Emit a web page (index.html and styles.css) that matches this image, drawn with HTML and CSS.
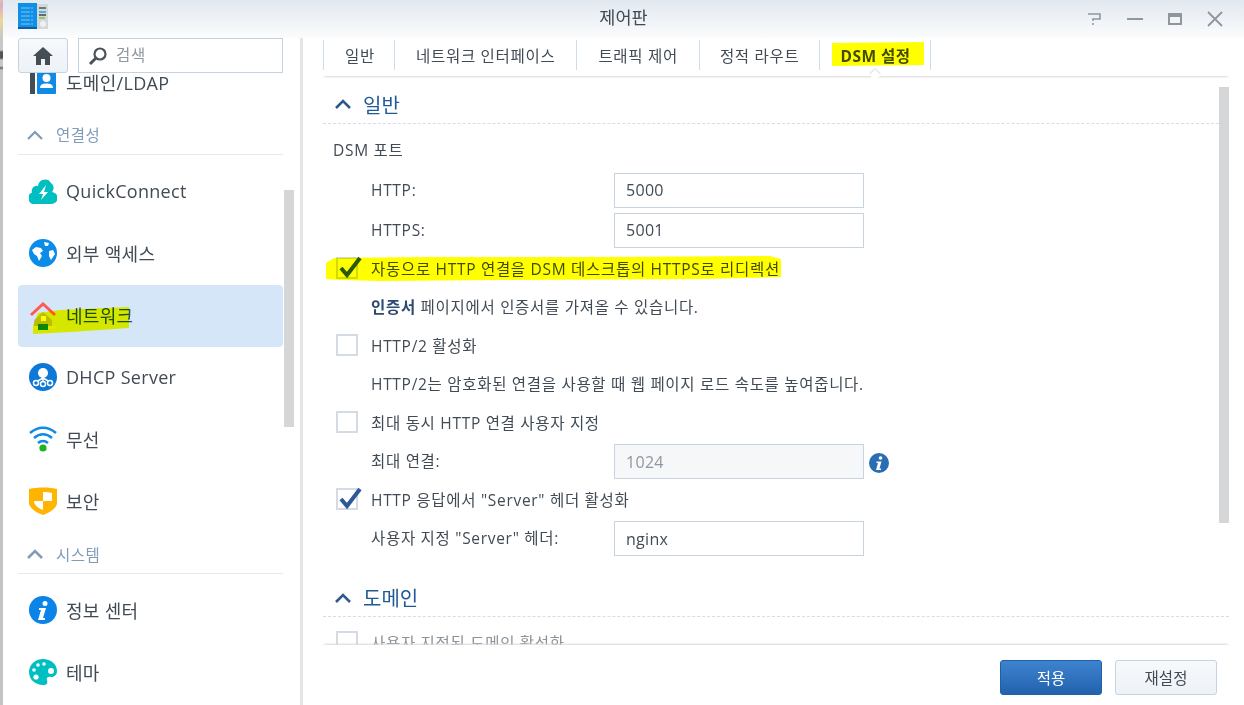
FILE: index.html
```html
<!DOCTYPE html>
<html lang="ko">
<head>
<meta charset="utf-8">
<title>제어판</title>
<link rel="stylesheet" href="styles.css">
</head>
<body>
<div class="desk"></div>
<div class="window">
  <header class="titlebar">
    <svg class="app-icon" width="32" height="28" viewBox="0 0 32 28"><rect x="0" y="1" width="19" height="24" fill="#0f8fe6"/><rect x="0" y="25" width="19" height="2" fill="#0a5fa8"/><path d="M3 6h12M3 10h12M3 14h12M3 18h12M3 22h12" stroke="#7cc6f5" stroke-width="1" stroke-dasharray="9 1"/><rect x="19" y="2" width="11" height="25" fill="#d3d8dc"/><path d="M21 6h7" stroke="#555" stroke-width="1.5"/><path d="M21 10h7" stroke="#1ea8d8" stroke-width="1.5"/><path d="M21 13h7" stroke="#444" stroke-width="1.5"/><path d="M21 16h6" stroke="#7bc62d" stroke-width="1.5"/><circle cx="25" cy="22" r="3" fill="#eef1f3"/></svg>
    <div class="title">제어판</div>
    <div class="win-controls">
      <svg width="16" height="16" viewBox="0 0 16 16"><path d="M1 3h12v5H6v2" fill="none" stroke="#8f979d" stroke-width="1.6"/><path d="M6 12v2" stroke="#8f979d" stroke-width="1.6"/></svg>
      <svg width="16" height="16" viewBox="0 0 16 16"><path d="M0 8h16" stroke="#8f979d" stroke-width="2"/></svg>
      <svg width="16" height="16" viewBox="0 0 16 16"><rect x="1" y="2" width="14" height="12" fill="#8f979d"/><rect x="3" y="6" width="10" height="6" fill="#f2f5f8"/></svg>
      <svg width="16" height="16" viewBox="0 0 16 16"><path d="M1 1l14 14M15 1L1 15" stroke="#8f979d" stroke-width="1.8"/></svg>
    </div>
  </header>
  <div class="panes">
    <aside class="sidebar">
      <div class="toolbar">
        <button class="home-btn"><svg width="22" height="20" viewBox="0 0 22 20"><path d="M11 1L1 10h3v9h5v-6h4v6h5v-9h3z" fill="#454d55"/></svg></button>
        <div class="search">
          <svg width="20" height="20" viewBox="0 0 20 20"><circle cx="12" cy="8" r="5.5" fill="none" stroke="#4a525a" stroke-width="2.2"/><path d="M8 12l-6 6" stroke="#4a525a" stroke-width="3"/></svg>
          <span>검색</span>
        </div>
      </div>
      <nav class="nav">
        <a class="item first">
          <svg class="ico" viewBox="0 0 28 28"><rect x="1" y="2" width="5" height="24" fill="#444d55"/><rect x="8" y="2" width="19" height="24" rx="1" fill="#0f8be6"/><circle cx="17.500" cy="10" r="4" fill="#fff"/><path d="M11 20c0-4 4-4.500 6.500-4.500S24 16 24 20z" fill="#fff"/></svg>
          <span>도메인/LDAP</span>
        </a>
        <div class="group"><svg width="16" height="10" viewBox="0 0 16 10"><path d="M1 9l7-7 7 7" fill="none" stroke="#7f9cb8" stroke-width="2.200"/></svg><span>연결성</span></div>
        <a class="item">
          <svg class="ico" viewBox="0 0 28 28"><path d="M6 27a6 6 0 0 1-3-11.500A5 5 0 0 1 9 9a7 7 0 0 1 13-3 6 6 0 0 1 1 9 6 6 0 0 1-1 12z" fill="#00bfc0"/><path d="M17 8l-7 9h4l-2 6 7-8h-4z" fill="#fff"/></svg>
          <span>QuickConnect</span>
        </a>
        <a class="item">
          <svg class="ico" viewBox="0 0 28 28"><circle cx="14" cy="14" r="14" fill="#0a8ce8"/><path d="M3 11l4-3 5 1 2 3-3 2 2 3-3 5-2-5-3-2zM15 3l5 1-1 3-3 0zM20 12l4-1 2 4-4 6-2-4z" fill="#fff"/></svg>
          <span>외부 액세스</span>
        </a>
        <a class="item active">
          <svg class="ico" viewBox="0 0 28 32"><path d="M14 10l-9 8v9h18v-9z" fill="#bcbcc0"/><path d="M2 13L14 2l12 11" fill="none" stroke="#ff5a50" stroke-width="3"/><rect x="12" y="14" width="5" height="5" fill="#fff"/><rect y="24" x="0" width="28" height="3" fill="#e4e6e8"/><rect x="9" y="22" width="10" height="6" fill="#0a8a10"/></svg>
          <span>네트워크</span>
        </a>
        <a class="item">
          <svg class="ico" viewBox="0 0 28 28"><circle cx="14" cy="14" r="14" fill="#0d78d8"/><circle cx="14" cy="10" r="5" fill="#fff"/><path d="M14 12v7M14 15l-7 4M14 15l7 4" stroke="#fff" stroke-width="1.500"/><g fill="#0d78d8" stroke="#fff" stroke-width="1.500"><circle cx="7" cy="20" r="2.500"/><circle cx="14" cy="21" r="2.500"/><circle cx="21" cy="20" r="2.500"/></g></svg>
          <span>DHCP Server</span>
        </a>
        <a class="item">
          <svg class="ico" viewBox="0 0 28 28"><g fill="none" stroke="#0f8be6" stroke-width="2.600"><path d="M1 8c8-7 18-7 26 0"/><path d="M5 13c6-5 12-5 18 0"/><path d="M9 18c3-2.500 7-2.500 10 0"/></g><circle cx="14" cy="23" r="3.600" fill="#1fb41f"/></svg>
          <span>무선</span>
        </a>
        <a class="item">
          <svg class="ico" viewBox="0 0 28 28"><path d="M0 2c9-2 19-2 28 0v14c0 5-8 10-14 12C8 26 0 21 0 16z" fill="#ffb400"/><path d="M14 5c3 0 6 0 9 1v8h-9zM14 14v9c-3-1-8-4-9-8v-1z" fill="#fff"/></svg>
          <span>보안</span>
        </a>
        <div class="group short"><svg width="16" height="10" viewBox="0 0 16 10"><path d="M1 9l7-7 7 7" fill="none" stroke="#7f9cb8" stroke-width="2.600"/></svg><span>시스템</span></div>
        <a class="item">
          <svg class="ico" viewBox="0 0 28 28"><circle cx="14" cy="14" r="14" fill="#0a84e8"/><circle cx="16" cy="7.500" r="2.500" fill="#fff"/><path d="M10 12h7l-3 10h2v2H9l3-10h-2z" fill="#fff"/></svg>
          <span>정보 센터</span>
        </a>
        <a class="item">
          <svg class="ico" viewBox="0 0 28 28"><path d="M14 1C6 1 0 7 0 14c0 8 7 13 14 13 4 0 5-2 4-5-1-2 1-4 4-3 3 0 6-2 6-6C28 6 22 1 14 1z" fill="#00bfc0"/><g fill="#fff"><circle cx="9" cy="7" r="1.800"/><circle cx="15" cy="6" r="1.800"/><circle cx="5" cy="12" r="1.800"/><circle cx="22" cy="13" r="3"/><circle cx="7" cy="19" r="2.600"/></g></svg>
          <span>테마</span>
        </a>
      </nav>
      <div class="scroll-thumb side"></div>
    </aside>
    <main class="main">
      <div class="tabs">
        <div class="tab">일반</div>
        <div class="tab">네트워크 인터페이스</div>
        <div class="tab">트래픽 제어</div>
        <div class="tab route">정적 라우트</div>
        <div class="tab current">DSM 설정</div>
      </div>
      <div class="scroller">
        <h2 class="section"><svg width="18" height="12" viewBox="0 0 18 12"><path d="M2 10l7-7 7 7" fill="none" stroke="#2c5a8c" stroke-width="2.600"/></svg><span>일반</span></h2>
        <div class="row top">DSM 포트</div>
        <div class="field"><label>HTTP:</label><input type="text" value="5000"></div>
        <div class="field"><label>HTTPS:</label><input type="text" value="5001"></div>
        <div class="row after"><span class="box"><svg width="26" height="24" viewBox="0 0 26 24"><path d="M4 12l6 7L23 2" fill="none" stroke="#2c5a96" stroke-width="4"/></svg></span>자동으로 HTTP 연결을 DSM 데스크톱의 HTTPS로 리디렉션</div>
        <div class="row indent"><b>인증서</b>&nbsp;페이지에서 인증서를 가져올 수 있습니다.</div>
        <div class="row"><span class="box"></span>HTTP/2 활성화</div>
        <div class="row indent">HTTP/2는 암호화된 연결을 사용할 때 웹 페이지 로드 속도를 높여줍니다.</div>
        <div class="row"><span class="box"></span>최대 동시 HTTP 연결 사용자 지정</div>
        <div class="row indent in"><label>최대 연결:</label><input type="text" value="1024" disabled>
          <svg class="info" width="20" height="20" viewBox="0 0 20 20"><circle cx="10" cy="10" r="10" fill="#2a6db5"/><circle cx="11.500" cy="5" r="1.800" fill="#fff"/><path d="M7.500 8.500h5l-2 7h1.500V17H7l2-7H7.500z" fill="#fff"/></svg>
        </div>
        <div class="row"><span class="box"><svg width="26" height="24" viewBox="0 0 26 24"><path d="M4 12l6 7L23 2" fill="none" stroke="#2c5a96" stroke-width="4"/></svg></span>HTTP 응답에서 "Server" 헤더 활성화</div>
        <div class="row indent in"><label>사용자 지정 "Server" 헤더:</label><input type="text" value="nginx"></div>
        <h2 class="section second"><svg width="18" height="12" viewBox="0 0 18 12"><path d="M2 10l7-7 7 7" fill="none" stroke="#2c5a8c" stroke-width="2.600"/></svg><span>도메인</span></h2>
        <div class="row clipped"><span class="box"></span>사용자 지정된 도메인 활성화</div>
      </div>
      <div class="scroll-thumb mainbar"></div>
      <footer class="footer">
        <button class="btn primary">적용</button>
        <button class="btn">재설정</button>
      </footer>
    </main>
  </div>
</div>
<svg class="marker" width="1244" height="705" viewBox="0 0 1244 705">
  <polygon points="832,43 924,42 924,65 832,66"/>
  <polygon points="326,263 334,258 420,257 600,257 770,256 781,259 781,277 700,279 500,280 380,281 340,280 326,279"/>
  <polygon points="33,334 33,326 38,313 60,310 129,307 129,328 70,332"/>
</svg>
</body>
</html>
```

FILE: styles.css
```css
* { box-sizing: border-box; }
html, body { margin: 0; height: 100%; overflow: hidden; }
body {
  display: flex;
  width: 1244px;
  height: 705px;
  position: relative;
  font-family: "Open Sans", "Noto Sans CJK KR", sans-serif;
  font-size: 15.5px;
  letter-spacing: .7px;
  color: #414b55;
  background: #fff;
}
.desk {
  width: 3px;
  flex: none;
  background: linear-gradient(#d8c8a8 0, #e0a8d0 5px, #e8d890 20px, #c8c8c8 38px, #c8c8c8 50px, #555 52px, #555 58px, #c8c8c8 60px, #c8c8c8 66px, #666 68px, #c4c4c4 70px, #c4c4c4 100%);
}
.window { flex: 1; display: flex; flex-direction: column; min-width: 0; }
.titlebar {
  height: 38px;
  flex: none;
  display: flex;
  align-items: center;
  position: relative;
  background: linear-gradient(#e2e8f0, #fbfcfd);
}
.app-icon { margin: -7px 0 0 15px; flex: none; }
.title { position: absolute; left: 0; right: 0; text-align: center; font-size: 17.5px; letter-spacing: 0; top: 4px; color: #3f4a55; }
.win-controls {
  margin-left: auto;
  display: flex;
  gap: 24px;
  padding-right: 21px;
}
.panes { flex: 1; display: flex; min-height: 0; }
.sidebar {
  width: 300px;
  flex: none;
  display: flex;
  flex-direction: column;
  position: relative;
  border-right: 3px solid #e4e4e4;
  overflow: hidden;
}
.toolbar {
  display: flex;
  gap: 10px;
  padding-left: 15px;
  height: 35px;
  flex: none;
  position: relative;
  z-index: 1;
  background: #fff;
}
.home-btn {
  width: 50px;
  height: 35px;
  padding: 0;
  border: 1px solid #c4d2e2;
  border-radius: 3px;
  background: linear-gradient(#f7f9fb, #edf2f7);
  display: flex;
  align-items: center;
  justify-content: center;
}
.search {
  width: 205px;
  height: 35px;
  border: 1px solid #c4d2e2;
  display: flex;
  align-items: center;
  gap: 8px;
  padding-left: 9px;
  color: #8f979f;
}
.search span { padding-bottom: 3px; }
.nav { padding-left: 15px; margin-top: -22px; width: 280px; }
.item {
  height: 62px;
  display: flex;
  align-items: center;
  gap: 9px;
  padding-left: 11px;
  font-size: 18px;
  letter-spacing: .3px;
  border-radius: 4px;
}
.item span { white-space: nowrap; }
.item.active { background: #d5e6f8; color: #1d4f8a; margin: 1px 0 -1px; padding-bottom: 2px; }
.ico { width: 28px; height: 28px; flex: none; }
.active .ico { height: 32px; margin-top: 6px; }
.group {
  height: 42px;
  margin-bottom: 5px;
  border-bottom: 1px solid #e8ebee;
  display: flex;
  align-items: center;
  gap: 13px;
  padding: 2px 0 0 9px;
  font-size: 15.5px;
  letter-spacing: .5px;
  color: #7f9cb8;
}
.group.short { height: 42px; padding-top: 3px; }
.scroll-thumb { position: absolute; width: 10px; background: #d5d6d8; }
.scroll-thumb.side { left: 281px; top: 152px; height: 237px; }
.main { flex: 1; display: flex; flex-direction: column; position: relative; min-width: 0; padding: 0 15px 0 20px; }
.tabs {
  height: 38px;
  flex: none;
  display: flex;
  position: relative;
  z-index: 1;
  background: #fff;
  box-shadow: 0 2px 2px -1px #d8d8d8;
}
.tab {
  height: 30px;
  margin-top: 2px;
  border-left: 1px solid #cfdce9;
  padding: 0 21px;
  display: flex;
  align-items: center;
  white-space: nowrap;
}
.tab:first-child { width: 71px; }
.tab.route { padding: 0 20px; }
.tab.current { font-weight: 700; letter-spacing: .5px; padding: 0 19px 0 20px; border-right: 1px solid #cfdce9; }
.tab.current::after {
  content: "";
  position: absolute;
  left: 548px;
  top: 33px;
  width: 8px;
  height: 8px;
  background: #fff;
  transform: rotate(45deg);
  box-shadow: -1px -1px 1px #dcdcdc;
}
.scroller { flex: 1; min-height: 0; overflow: hidden; }
.section {
  margin: 0;
  height: 48px;
  padding: 9px 0 0 11px;
  display: flex;
  align-items: center;
  gap: 11px;
  font-weight: 400;
  font-size: 20px;
  letter-spacing: 0;
  color: #1f5a96;
  border-bottom: 1px dashed #d3deea;
}
.section.second { height: 60px; padding-top: 22px; }
.row {
  height: 38.5px;
  display: flex;
  align-items: center;
  padding-left: 13px;
  white-space: nowrap;
}
.row.top { height: 40px; margin-top: 6px; padding: 0 0 2px 10px; }
.row.after { margin-top: -1px; }
.row.indent { padding-left: 48px; }
.row b { color: #2c4a70; }
.row.clipped { margin-top: 6px; color: #8a929a; }
.box {
  width: 22px;
  height: 22px;
  flex: none;
  margin-right: 13px;
  border: 2px solid #d4dbe4;
  position: relative;
}
.box svg { position: absolute; left: -1px; top: -3px; }
.field { height: 40px; display: flex; align-items: center; padding-left: 48px; }
.row.in input { margin-top: 2px; }
label { display: block; width: 243px; flex: none; }
input {
  width: 250px;
  height: 35px;
  border: 1px solid #c8d3e0;
  padding: 0 11px;
  font: inherit;
  font-size: 16px;
  letter-spacing: .3px;
  color: #414b55;
  background: #fff;
}
input:disabled { background: #f5f7f9; color: #8f979f; }
.info { margin-left: 5px; margin-top: 5px; }
.scroll-thumb.mainbar { right: 15px; top: 49px; height: 436px; }
.footer {
  height: 60px;
  flex: none;
  display: flex;
  justify-content: flex-end;
  align-items: flex-start;
  gap: 13px;
  padding: 15px 12px 0 0;
  position: relative;
  background: #fff;
  box-shadow: 0 -2px 2px -1px #d8d8d8;
}
.btn {
  width: 102px;
  height: 35px;
  border: 1px solid #c4d2e2;
  border-radius: 3px;
  font: inherit;
  color: #414b55;
  background: linear-gradient(#f7f9fb, #edf2f7);
}
.btn.primary {
  border-color: #1f5fa8;
  color: #fff;
  background: linear-gradient(#3e83cf, #2262ad);
}
.marker {
  position: absolute;
  left: 0;
  top: 0;
  z-index: 5;
  pointer-events: none;
  mix-blend-mode: multiply;
  fill: #ffff00;
}
```
